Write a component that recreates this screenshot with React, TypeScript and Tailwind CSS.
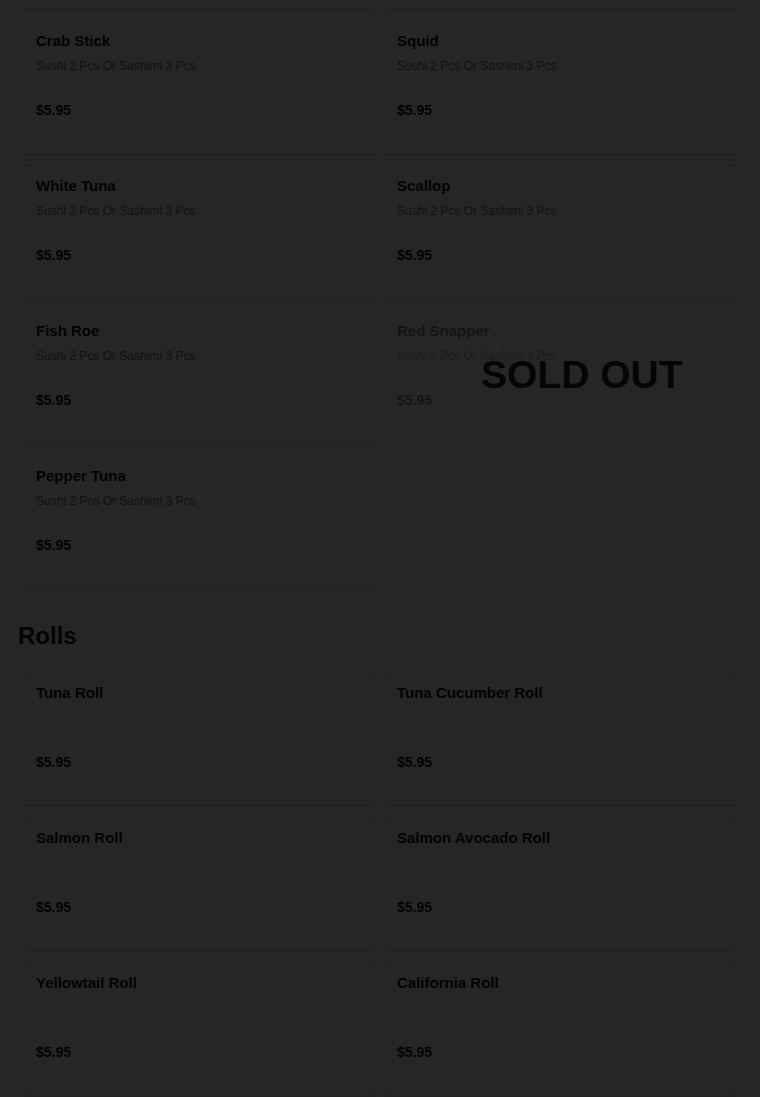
import React from "react";

type Item = { name: string; desc?: string; price: string; soldOut?: boolean; hidden?: boolean };

const DESC = "Sushi 2 Pcs Or Sashimi 3 Pcs";

const topItems: Item[] = [
  { name: "a", price: "", hidden: true },
  { name: "b", price: "", hidden: true },
  { name: "Crab Stick", desc: DESC, price: "$5.95" },
  { name: "Squid", desc: DESC, price: "$5.95" },
  { name: "White Tuna", desc: DESC, price: "$5.95" },
  { name: "Scallop", desc: DESC, price: "$5.95" },
  { name: "Fish Roe", desc: DESC, price: "$5.95" },
  { name: "Red Snapper", desc: DESC, price: "$5.95", soldOut: true },
  { name: "Pepper Tuna", desc: DESC, price: "$5.95" },
];

const rolls: Item[] = [
  { name: "Tuna Roll", price: "$5.95" },
  { name: "Tuna Cucumber Roll", price: "$5.95" },
  { name: "Salmon Roll", price: "$5.95" },
  { name: "Salmon Avocado Roll", price: "$5.95" },
  { name: "Yellowtail Roll", price: "$5.95" },
  { name: "California Roll", price: "$5.95" },
];

function Card({ item }: { item: Item }) {
  if (item.hidden) {
    return <div className="h-[134px] bg-white border border-gray-200 shadow-sm" />;
  }
  return (
    <div
      className={
        "relative h-[134px] bg-white border px-[11px] pt-[11px] " +
        (item.soldOut ? "border-gray-100" : "border-gray-200 shadow-sm")
      }
    >
      <div className={item.soldOut ? "opacity-50" : ""}>
        <div className="h-[18px] text-[15px] leading-[18px] font-bold text-[#111]">{item.name}</div>
        <div className="mt-[8px] h-[16px] text-[12px] leading-[16px] text-gray-500">{item.desc ?? ""}</div>
        <div className="mt-[27px] h-[18px] text-[14px] leading-[18px] font-bold text-[#111]">{item.price}</div>
      </div>
      {item.soldOut && (
        <div className="absolute left-[95px] top-[44px] text-[39px] leading-[39px] font-bold text-[#222] whitespace-nowrap">
          SOLD OUT
        </div>
      )}
    </div>
  );
}

export default function App() {
  return (
    <div
      className="relative h-[1097px] overflow-hidden bg-white"
      style={{ fontFamily: '"Liberation Sans", Arial, sans-serif' }}
    >
      <div className="mt-[-125px] grid grid-cols-2 gap-y-[11px] gap-x-[10px] pl-[24px] pr-[24px]">
        {topItems.map((it) => (
          <Card key={it.name} item={it} />
        ))}
      </div>
      <h2 className="mt-[31px] pl-[18px] text-[24px] leading-[32px] font-bold text-[#111]">Rolls</h2>
      <div className="mt-[20px] grid grid-cols-2 gap-y-[11px] gap-x-[10px] pl-[24px] pr-[24px]">
        {rolls.map((it) => (
          <Card key={it.name} item={it} />
        ))}
      </div>
      <div className="fixed inset-0 bg-black/85" />
    </div>
  );
}
